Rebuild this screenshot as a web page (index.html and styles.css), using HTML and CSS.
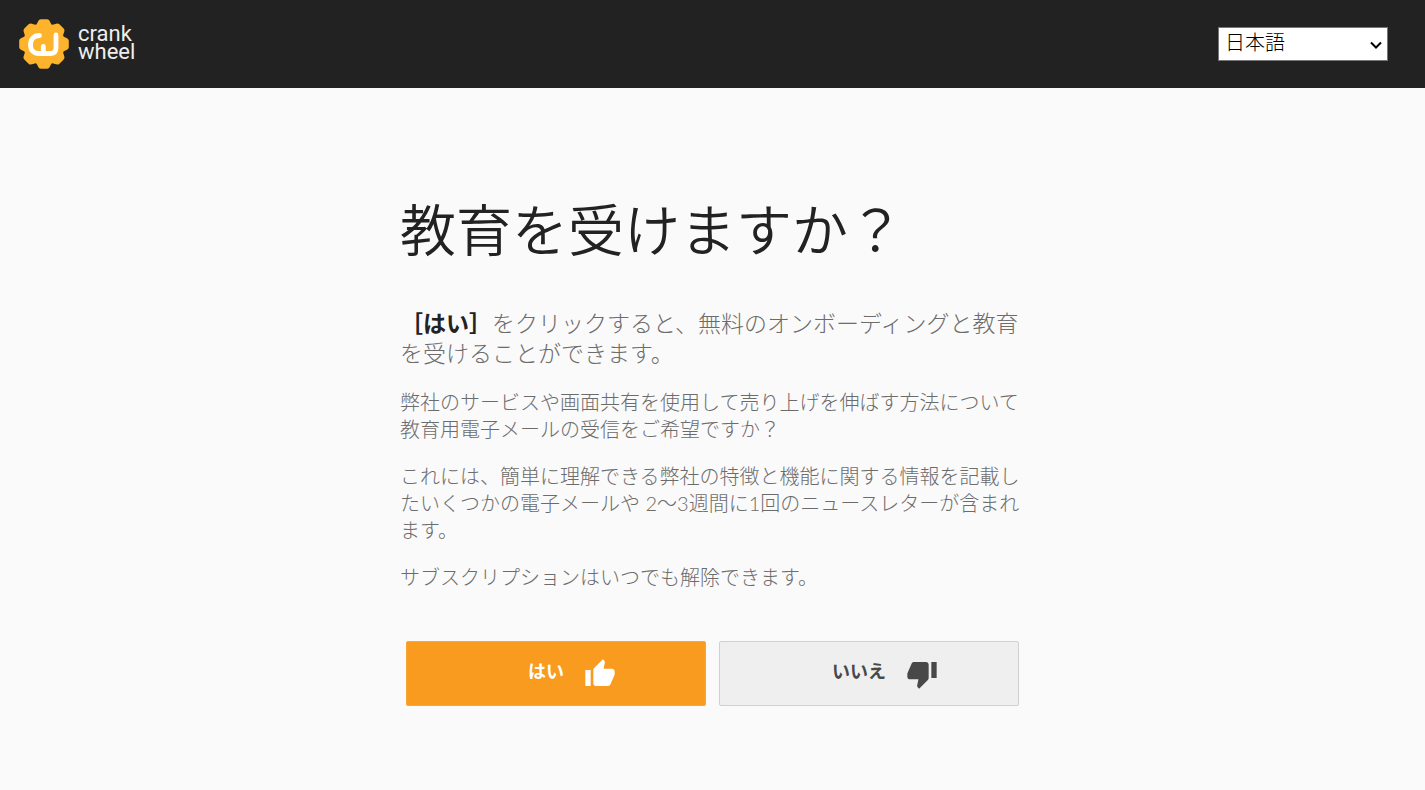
FILE: index.html
```
<!DOCTYPE html>
<html lang="ja">
<head>
    <meta charset="UTF-8">
    <meta name="viewport" content="width=device-width, initial-scale=1.0">
    <title>CrankWheel</title>
    <link rel="stylesheet" href="styles.css">
</head>
<body>
    <header class="header">
        <a class="logo" href="#">
            <svg class="logo-mark" viewBox="-25 -25 50 50" aria-hidden="true">
                <defs>
                    <path id="tooth" d="M0 0L-9 -18.500C-6 -19.500 -6.500 -24.800 -3 -24.800H3C6.500 -24.800 6 -19.500 9 -18.500Z"/>
                </defs>
                <g fill="#fdb32b">
                    <circle r="20.4"/>
                    <use href="#tooth"/>
                    <use href="#tooth" transform="rotate(45)"/>
                    <use href="#tooth" transform="rotate(90)"/>
                    <use href="#tooth" transform="rotate(135)"/>
                    <use href="#tooth" transform="rotate(180)"/>
                    <use href="#tooth" transform="rotate(225)"/>
                    <use href="#tooth" transform="rotate(270)"/>
                    <use href="#tooth" transform="rotate(315)"/>
                </g>
                <path d="M-4.500 -8.500C-10 -8.500 -13.500 -5 -13.500 1C-13.500 6.500 -10 9.500 -5 9.500H6C10.500 9.500 12 7 12 4V-9M-0.700 2.500V9" fill="none" stroke="#fff" stroke-width="4.800" stroke-linecap="round" stroke-linejoin="round"/>
            </svg>
            <span class="logo-text">crank<br>wheel</span>
        </a>
        <div class="language">
            <select aria-label="言語">
                <option lang="ja" selected>日本語</option>
                <option lang="en">English</option>
            </select>
            <svg class="arrow" viewBox="0 0 12 8" aria-hidden="true"><path d="M1 1.500L6 6.500L11 1.500" fill="none" stroke="#000" stroke-width="2"/></svg>
        </div>
    </header>

    <main class="content">
        <h1>教育を受けますか？</h1>
        <p class="lead"><strong>［はい］</strong>をクリックすると、無料のオンボーディングと教育を受けることができます。</p>
        <p>弊社のサービスや画面共有を使用して売り上げを伸ばす方法について教育用電子メールの受信をご希望ですか？</p>
        <p>これには、簡単に理解できる弊社の特徴と機能に関する情報を記載したいくつかの電子メールや 2～3週間に1回のニュースレターが含まれます。</p>
        <p>サブスクリプションはいつでも解除できます。</p>

        <div class="buttons">
            <button class="btn btn-yes" type="button">
                <span>はい</span>
                <svg class="icon" viewBox="0 0 24 24" aria-hidden="true"><path d="M1 21h4V9H1v12zm22-11c0-1.100-.9-2-2-2h-6.310l.95-4.570.03-.32c0-.41-.17-.79-.44-1.060L14.170 1 7.590 7.590C7.220 7.950 7 8.450 7 9v10c0 1.100.9 2 2 2h9c.83 0 1.540-.5 1.840-1.220l3.020-7.050c.09-.23.14-.47.14-.73v-2z"/></svg>
            </button>
            <button class="btn btn-no" type="button">
                <span>いいえ</span>
                <svg class="icon" viewBox="0 0 24 24" aria-hidden="true"><path d="M15 3H6c-.83 0-1.540.5-1.840 1.220l-3.020 7.050c-.09.23-.14.47-.14.73v2c0 1.100.9 2 2 2h6.310l-.95 4.570-.03.32c0 .41.17.79.44 1.060L9.830 23l6.590-6.590c.36-.36.58-.86.58-1.410V5c0-1.100-.9-2-2-2zm4 0v12h4V3h-4z"/></svg>
            </button>
        </div>
    </main>
</body>
</html>
```

FILE: styles.css
```
* {
    box-sizing: border-box;
}
body {
    margin: 0;
    background-color: #fafafa;
    color: #6c6c6c;
    font-family: Lato, "Noto Sans CJK JP", sans-serif;
    font-size: 20px;
    font-weight: 300;
    line-height: 27px;
}
.header {
    display: flex;
    align-items: center;
    justify-content: space-between;
    height: 88px;
    padding: 0 37px 0 19px;
    background-color: #222;
}
.logo {
    display: flex;
    align-items: center;
    gap: 9px;
    color: #eee;
    text-decoration: none;
}
.logo-mark {
    width: 50px;
    height: 50px;
}
.logo-text {
    padding-bottom: 3px;
    font-family: Roboto, sans-serif;
    font-size: 22px;
    font-weight: 400;
    line-height: 18px;
}
.language {
    position: relative;
    width: 170px;
}
.language select {
    display: block;
    width: 100%;
    height: 34px;
    padding: 0 24px 3px 6px;
    border: 1px solid #767676;
    border-radius: 0;
    appearance: none;
    background-color: #fff;
    color: #000;
    font: inherit;
}
.arrow {
    position: absolute;
    top: 14px;
    right: 6px;
    width: 12px;
    height: 8px;
    pointer-events: none;
}
.content {
    max-width: 625px;
    margin: 0 auto;
    padding: 108px 0 84px;
}
h1 {
    margin: 0 0 44px;
    color: #222;
    font-size: 56px;
    font-weight: 350;
    line-height: 68px;
}
p {
    margin: 0 0 20px;
}
.lead {
    margin-bottom: 21px;
    font-size: 23px;
    line-height: 30px;
}
.lead strong {
    color: #222;
    font-weight: 700;
}
.buttons {
    display: flex;
    flex-wrap: wrap;
    justify-content: center;
    gap: 13px;
    margin-top: 50px;
}
.btn {
    display: flex;
    align-items: center;
    justify-content: center;
    gap: 20px;
    width: 300px;
    height: 65px;
    padding: 0 0 0 32px;
    border: 1px solid #d0d0d0;
    border-radius: 2px;
    font: inherit;
    font-size: 18px;
    font-weight: 700;
    cursor: pointer;
}
.btn span {
    padding-bottom: 4px;
}
.btn-yes {
    border-color: #faa634;
    background-color: #f99b1e;
    color: #fff;
}
.btn-no {
    background-color: #efefef;
    color: #484848;
}
.icon {
    width: 32px;
    height: 32px;
    fill: currentColor;
}
```
